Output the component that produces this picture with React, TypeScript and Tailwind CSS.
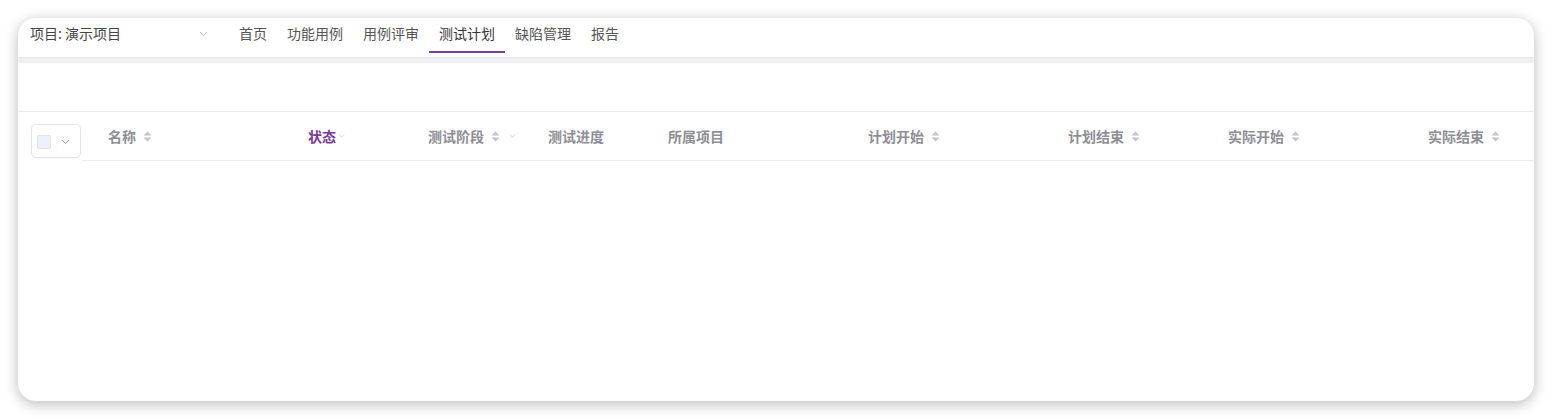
import React from "react";

const FONT = { fontFamily: '"Noto Sans CJK SC", "Noto Sans", sans-serif' };

const navItems = ["首页", "功能用例", "用例评审", "测试计划", "缺陷管理", "报告"];

type Column = {
  title: string;
  width: string;
  sort?: boolean;
  filter?: boolean;
  active?: boolean;
};

const columns: Column[] = [
  { title: "名称", width: "w-[226px] pl-[26px]", sort: true },
  { title: "状态", width: "w-[120px]", filter: true, active: true },
  { title: "测试阶段", width: "w-[120px]", sort: true, filter: true },
  { title: "测试进度", width: "w-[120px]" },
  { title: "所属项目", width: "w-[200px]" },
  { title: "计划开始", width: "w-[200px]", sort: true },
  { title: "计划结束", width: "w-[160px]", sort: true },
  { title: "实际开始", width: "w-[200px]", sort: true },
  { title: "实际结束", width: "flex-1", sort: true },
];

const Chevron = ({ className = "" }: { className?: string }) => (
  <svg width="9" height="6" viewBox="0 0 9 6" className={className} fill="none">
    <path d="M1 1l3.5 3.5L8 1" stroke="currentColor" strokeWidth="1" />
  </svg>
);

const SortIcon = () => (
  <svg width="9" height="11" viewBox="0 0 9 11" className="text-[#c3c4cc]">
    <path d="M4.5 0.5L8.5 4.5H0.5z" fill="currentColor" />
    <path d="M4.5 10.5L8.5 6.5H0.5z" fill="currentColor" />
  </svg>
);

export default function App() {
  return (
    <div className="w-[1552px] h-[419px] bg-white pt-[18px] px-[18px]" style={FONT}>
      <div className="h-[383px] bg-white rounded-[18px] shadow-[0_3px_14px_rgba(0,0,0,0.28)] overflow-hidden flex flex-col">
        {/* top bar */}
        <div className="h-[39px] flex items-stretch shrink-0">
          <div className="w-[211px] pl-[12px] pr-[21px] pt-[5px] flex items-start justify-between">
            <span className="text-[14px] leading-[20px] text-[#444]">项目: 演示项目</span>
            <Chevron className="mt-[8px] text-[#c4c4c8]" />
          </div>
          {navItems.map((item) => (
            <div
              key={item}
              className={`relative px-[10px] pt-[5px] text-[14px] leading-[20px] ${
                item === "测试计划" ? "text-[#333]" : "text-[#555]"
              }`}
            >
              {item}
              {item === "测试计划" && (
                <div className="absolute left-0 right-0 bottom-[4px] h-[2px] bg-[#7f3f98]" />
              )}
            </div>
          ))}
        </div>
        <div className="h-[6px] bg-[#f0f0f2] border-t border-[#e6e6ea] shrink-0" />

        {/* toolbar area */}
        <div className="h-[49px] border-b border-[#e9ebf4] shrink-0" />

        {/* table header */}
        <div className="h-[49px] flex items-stretch shrink-0">
          <div className="w-[64px] pl-[13px] pt-[12px]">
            <div className="w-[50px] h-[34px] rounded-[5px] border border-[#e4e5ec] flex items-center pl-[5px] gap-[10px]">
              <div className="w-[14px] h-[14px] mt-[2px] rounded-[2px] bg-[#eef0fb] border border-[#dfe2f0]" />
              <Chevron className="mt-[2px] text-[#a9aab3]" />
            </div>
          </div>
          <div className="flex-1 flex items-center border-b border-[#ecedf3]">
            {columns.map((col) => (
              <div key={col.title} className={`${col.width} flex items-center`}>
                <span
                  className={`text-[14px] font-bold leading-[20px] ${
                    col.active ? "text-[#7b3a94]" : "text-[#8e8e96]"
                  }`}
                >
                  {col.title}
                </span>
                {col.sort && (
                  <span className="ml-[7px] flex items-center">
                    <SortIcon />
                  </span>
                )}
                {col.filter && (
                  <Chevron
                    className={`${col.sort ? "ml-[8px]" : "ml-[1px]"} scale-75 text-[#c4c4cc]`}
                  />
                )}
              </div>
            ))}
          </div>
        </div>

        <div className="flex-1" />
      </div>
    </div>
  );
}
